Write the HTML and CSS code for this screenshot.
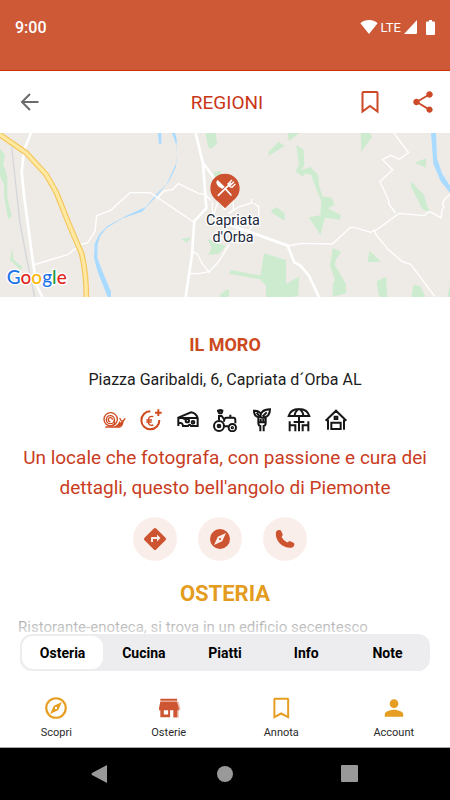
FILE: index.html
```html
<!DOCTYPE html>
<html lang="it">
<head>
    <meta charset="UTF-8">
    <meta name="viewport" content="width=device-width, initial-scale=1.0">
    <title>Il Moro - Osterie</title>
    <link rel="stylesheet" href="styles.css">
</head>
<body>

    <div class="status-bar">
        <span class="clock">9:00</span>
        <div class="status-icons">
            <svg width="18" height="14" viewBox="0 0 18 14"><path d="M.4 3.200C5-1 13-1 17.600 3.200L9 14z"/></svg>
            <span class="network">LTE</span>
            <svg width="14" height="14" viewBox="0 0 14 14"><path d="M13 0v13a1 1 0 0 1-1 1H0z"/></svg>
            <svg class="battery" width="9" height="15" viewBox="0 0 9 15"><path d="M3 0h3v1.500h2q1 0 1 1V14q0 1-1 1H1q-1 0-1-1V2.500q0-1 1-1h2z"/></svg>
        </div>
    </div>

    <header class="header">
        <button class="icon-btn back" aria-label="Indietro">
            <svg width="24" height="24" viewBox="0 0 24 24"><path d="M20.500 12H4.500M12 4l-8 8 8 8"/></svg>
        </button>
        <h1>REGIONI</h1>
        <div class="header-actions">
            <button class="icon-btn" aria-label="Salva">
                <svg width="26" height="26" viewBox="0 0 26 26"><path class="outline" d="M6.500 3h13q1 0 1 1v18.500L13 17l-7.500 5.500V4q0-1 1-1z"/></svg>
            </button>
            <button class="icon-btn" aria-label="Condividi">
                <svg width="26" height="26" viewBox="0 0 24 24"><path d="M18 16.080c-.76 0-1.440.3-1.960.77L8.910 12.700c.05-.23.09-.46.09-.7s-.04-.47-.09-.7l7.050-4.110c.54.5 1.250.81 2.040.81 1.660 0 3-1.340 3-3s-1.340-3-3-3-3 1.340-3 3c0 .24.04.47.09.7L8.040 9.810C7.500 9.310 6.790 9 6 9c-1.660 0-3 1.340-3 3s1.340 3 3 3c.79 0 1.500-.31 2.040-.81l7.120 4.160c-.05.21-.08.43-.08.65 0 1.610 1.310 2.920 2.920 2.920s2.920-1.310 2.920-2.920-1.310-2.920-2.920-2.920z"/></svg>
            </button>
        </div>
    </header>

    <main>
        <svg class="map" viewBox="0 8 1350 492" preserveAspectRatio="xMidYMid slice" role="img" aria-label="Mappa di Capriata d'Orba">
            <rect class="land" width="1350" height="510"/>
            <g class="wood">
                <path d="M0 55l15 18-5 28 12 38v65l14 54-12 8-12-70V162L0 138zM36 353l5 35 27 22-6 8-32-28z"/>
                <path d="M617 8h30l4 32-18 17-10-10zM640 127l20-6 8 15-20 8zM542 325l33-4-15 16zM622 325l25 12 30 10-20 23-32 3 10-20zM660 492l15-10v18h-14z"/>
                <path d="M806 64l30-30 18 13-48 29zM863 8h36l-32 24zM889 44l22 14 2 46-8 14 26-8 24 24 2 30 10 34 28 4 9 22-20 10 38 20-2 14-45-6-14 52-35-53 35-6 3-42-24-60-6-20-20-3-7 9-20-16 10-18z"/>
                <path d="M1082 8h28l6 12-32 44zM1244 97l34-13v28zM1232 152l40 42 12 40 16 18-34-17-33-67zM811 242l19-12 24 19v22l-27-16zM693 419l86 16 3-4 10-62 66 20v71l40-21-4 57-18 4H798v-33l-17-20-94-17zM675 479l12 0v21h-12z"/>
                <path d="M999 353l25 12-15 20-5 18 34 58v28l-40 11v-40l7-11-15-44zM1109 361l34 34h-41zM1130 453l28-13 4 60h-25zM1240 463l22 5 14 32h-42zM1350 463v37h-8z"/>
            </g>
            <path class="rail" d="M35 50l24 220 20 110 25 120"/>
            <g class="river">
                <path d="M474 8h10v32h-7zM516 8h9l5 18v70l-31 68-35 40-38 40-58 20-49 30-18 22-8 26-1 40 14 38 27 64v16h-10l-30-76-11-42 2-42 14-28 23-24 58-32 40-18 18-7 33-41 34-32 24-48 3-60z"/>
                <path d="M1293 8h15l3 76 15 45 24 38v20l-28-34-22-53-4-54z"/>
            </g>
            <g class="street">
                <path d="M100 404l103-31 38-30 22-6 22-34 5-47 42-16 58-53h61l130 88M470 206l22-24 26-5 17-17 61 29 19 4 20 18M577 363l15 8 15 30 20 24 28-30 30-48M568 430h28l31-6"/>
                <path d="M637 215v38M655 210l-15 45M685 250l30-20 40-12v-12M760 218l16 10v32l-30 42-50 0M700 240v-30M675 360l15-20"/>
                <path d="M863 347l42-8 92 2 54-50 12 0 49 15 20-9 65-48 76 7 14-13 36 19 3-22 6-10-4-14 10-14 12-10M1187 248l-21-28v-10l-26-56 38-36-30-30 24-13 26 12 28-20-45-59M1122 297l6 16 36 44 42 36 26 9 50 66 22 30"/>
            </g>
            <g class="road">
                <path d="M93 8L72 60l-7 65 8 78 27 200 10 62 17 35M587 8l22 92 10 134-36 38-7 100-19 128M609 98l30 40 36 100"/>
                <path d="M680 280l183 66 20 50 18 10 26 30 30 64"/>
            </g>
            <path class="highway-edge" d="M-5 10l83 57 60 65 30 52 40 100 37 86q14 60 14 130"/>
            <path class="highway" d="M-5 10l83 57 60 65 30 52 40 100 37 86q14 60 14 130"/>
            <g class="pin">
                <path class="pin-body" d="M675 130c-25 0-44 19-44 44 0 19 12 33 27 43l17 17 17-17c15-10 27-24 27-43 0-25-19-44-44-44z"/>
                <path class="tool" d="M655 195l37-36M675 174l18 20"/>
                <path class="tine" d="M685 160l10-10M691 165l10-10M696 171l9-9M684 160q2 10 12 11"/>
                <path class="blade" d="M651 151c-5 5 0 14 8 20l8 5 7-7-21-20z"/>
            </g>
            <text class="town" x="699" y="284">Capriata</text>
            <text class="town" x="699" y="334">d'Orba</text>
            <text class="google" x="20" y="462"><tspan class="g-blue">G</tspan><tspan class="g-red">o</tspan><tspan class="g-yellow">o</tspan><tspan class="g-blue">g</tspan><tspan class="g-green">l</tspan><tspan class="g-red">e</tspan></text>
        </svg>

        <section class="place">
            <h2>IL MORO</h2>
            <p class="address">Piazza Garibaldi, 6, Capriata d´Orba AL</p>

            <div class="features">
                <!-- chiocciola -->
                <svg class="red" viewBox="0 0 72 72"><circle cx="26" cy="34" r="20"/><circle cx="25" cy="35" r="12"/><path d="M37 35q4 16-8 18M25 41a6 6 0 1 1 6-6"/><path d="M10 57h44q8-4 9-18"/><path class="foot" d="M40 54q10-4 12-14l5 4 2-8q6 0 4 8-4 13-23 13z"/><path d="M58 39l-5-9M63 39l7-8"/></svg>
                <!-- buon rapporto qualità prezzo -->
                <svg class="red" viewBox="0 0 72 72"><path class="bold" d="M34 10A27 27 0 1 0 61 36M58 4v20M48 14h20"/><path d="M43 26q-15-4-15 13t15 12M22 36h17M22 42h16"/></svg>
                <!-- formaggi -->
                <svg viewBox="0 0 72 72"><path d="M7 54V29L45 13q15 2 20 17v24H45q-4-8-9 0H21q-1-10-9-9H7M7 30h58"/><circle cx="34" cy="38" r="5"/><circle cx="51" cy="43" r="4"/><path d="M21 30q4 6 8 0"/></svg>
                <!-- azienda agricola -->
                <svg viewBox="0 0 72 72"><circle cx="18" cy="54" r="15"/><circle cx="18" cy="54" r="4"/><circle cx="58" cy="59" r="11"/><circle cx="58" cy="59" r="2"/><path d="M33 55h13M18 36V24h8l9 12M33 41q0-12 8-12h20q6 0 6 7v10M52 28v-8M12 8h19"/><circle cx="22" cy="11" r="5"/></svg>
                <!-- cucina vegetariana -->
                <svg viewBox="0 0 72 72"><path d="M25 30v15q0 8 6 9v16M47 30v15q0 8-6 9v16M32 33v10M40 33v10M25 43h22M28 29Q12 26 12 8q15-1 21 10M32 28Q28 6 60 4q0 25-23 25zM20 14l11 14M38 25L50 13"/></svg>
                <!-- tavoli all'aperto -->
                <svg viewBox="0 0 72 72"><path d="M5 24Q10 4 36 3q26 1 31 21zM23 22q1-12 13-19 12 7 13 19M36 22v48M20 42h32M8 40v30M8 52h17v18M64 40v30M64 52H47v18"/></svg>
                <!-- alloggio -->
                <svg viewBox="0 0 72 72"><path d="M5 38L36 8l31 30M12 35v30M60 35v30M22 63V44h28v19zM32 26h8v7h-8z"/></svg>
            </div>

            <p class="intro">Un locale che fotografa, con passione e cura dei dettagli, questo bell'angolo di Piemonte</p>

            <div class="actions">
                <button class="round-btn" aria-label="Indicazioni">
                    <svg width="24" height="24" viewBox="0 0 24 24"><path d="M22.500 10.800l-9.300-9.300a1.700 1.700 0 0 0-2.400 0l-9.300 9.300a1.700 1.700 0 0 0 0 2.400l9.300 9.300a1.700 1.700 0 0 0 2.400 0l9.300-9.300a1.700 1.700 0 0 0 0-2.400zM14 14.500V12h-4v3H8v-4c0-.55.45-1 1-1h5V7.500l3.500 3.500z"/></svg>
                </button>
                <button class="round-btn" aria-label="Mappa">
                    <svg width="24" height="24" viewBox="0 0 24 24"><path d="M12 10.900a1.100 1.100 0 1 0 0 2.200 1.100 1.100 0 0 0 0-2.200zM12 2a10 10 0 1 0 0 20 10 10 0 0 0 0-20zm2.190 12.190L6 18l3.810-8.190L18 6z"/></svg>
                </button>
                <button class="round-btn" aria-label="Chiama">
                    <svg width="24" height="24" viewBox="0 0 24 24"><path d="M6.500 3q1.400 0 1.800 1.200l1.300 3q.3 1-.4 1.800L8.500 10q2 3.600 5.600 5.500l1.500-1q.8-.6 1.700-.2l3.200 1.500q1 .5.900 1.600-.3 3-3.700 3.400C9.500 21.200 2.600 14 2.800 6.500 3 3.600 4.800 3 6.500 3z"/></svg>
                </button>
            </div>

            <h3>OSTERIA</h3>
            <p class="description">Ristorante-enoteca, si trova in un edificio secentesco</p>
        </section>
        <div class="fade"></div>
    </main>

    <div class="tabs" role="tablist">
        <button class="tab active" role="tab" aria-selected="true">Osteria</button>
        <button class="tab" role="tab">Cucina</button>
        <button class="tab" role="tab">Piatti</button>
        <button class="tab" role="tab">Info</button>
        <button class="tab" role="tab">Note</button>
    </div>

    <nav class="bottom-nav">
        <a href="#scopri">
            <svg width="26" height="26" viewBox="0 0 24 24"><path d="M12 2a10 10 0 1 0 0 20 10 10 0 0 0 0-20zm0 18a8 8 0 1 1 0-16 8 8 0 0 1 0 16zm-5.500-2.500l7.510-3.490L17.500 6.500 9.990 9.990zM12 10.900a1.100 1.100 0 1 1 0 2.200 1.100 1.100 0 0 1 0-2.200z"/></svg>
            Scopri
        </a>
        <a href="#osterie" class="current">
            <svg width="26" height="26" viewBox="0 0 24 24"><path class="shade" d="M20 6h1l1.500 6v2H21v7h-5v-1h4z"/><path d="M4 3.500h15.500v1.700H4zM4 6h15.500l1.500 6v2h-1.200v6.500H16V14h-3v6.500H4V14H2.800v-2zm3.200 8v4h4v-4z"/></svg>
            Osterie
        </a>
        <a href="#annota">
            <svg width="26" height="26" viewBox="0 0 24 24"><path d="M18 2.500H6.500c-1 0-1.500.5-1.500 1.500v18l7.200-3.800L19.500 22V4c0-1-.5-1.500-1.500-1.500zm-.3 16.400l-5.500-3-5.400 3V4.300h10.900z"/></svg>
            Annota
        </a>
        <a href="#account">
            <svg width="26" height="26" viewBox="0 0 24 24"><path d="M12 12a4 4 0 1 0 0-8 4 4 0 0 0 0 8zm0 1.500c-3 0-8.500 1.400-8.500 4.300V20h17v-2.200c0-2.900-5.500-4.300-8.500-4.300z"/></svg>
            Account
        </a>
    </nav>

    <div class="system-bar">
        <svg width="18" height="18" viewBox="0 0 18 18"><path d="M16 0v18L1 10q-1-1 0-2z"/></svg>
        <svg width="18" height="18" viewBox="0 0 18 18"><circle cx="9" cy="9" r="8"/></svg>
        <svg width="18" height="18" viewBox="0 0 18 18"><rect width="17" height="17" rx="1"/></svg>
    </div>

</body>
</html>
```

FILE: styles.css
```css
* {
    box-sizing: border-box;
}
body {
    font-family: Roboto, "Liberation Sans", sans-serif;
    display: flex;
    flex-direction: column;
    height: 100vh;
    margin: 0;
    background: white;
    color: #1c1c1c;
}
h1, h2, h3, p {
    margin: 0;
}
button {
    font-family: inherit;
    border: none;
    padding: 0;
    background: none;
    cursor: pointer;
}
svg {
    display: block;
    flex-shrink: 0;
}

/* status bar */
.status-bar {
    display: flex;
    justify-content: space-between;
    align-items: center;
    flex-shrink: 0;
    height: 71px;
    padding: 0 15px 16px;
    background: #cd5937;
    border-bottom: 1px solid #cc3300;
    color: white;
    fill: white;
}
.clock {
    font-size: 16px;
    font-weight: 500;
}
.status-icons {
    display: flex;
    align-items: center;
    gap: 3px;
}
.network {
    font-size: 13px;
}
.battery {
    margin-left: 5px;
}

/* header */
.header {
    display: grid;
    grid-template-columns: 1fr auto 1fr;
    align-items: center;
    flex-shrink: 0;
    height: 62px;
    padding: 0 14px 0 18px;
}
h1 {
    font-size: 19px;
    font-weight: 400;
    color: #c93617;
}
.header-actions {
    display: flex;
    justify-content: flex-end;
    gap: 27px;
}
.icon-btn {
    fill: #cc4a28;
}
.outline {
    fill: none;
    stroke: #cc4a28;
    stroke-width: 2;
}
.back {
    justify-self: start;
    fill: none;
    stroke: #6b6b6b;
    stroke-width: 2;
}

/* map */
main {
    position: relative;
    flex: 1;
    min-height: 0;
    overflow: hidden;
}
.map {
    width: 100%;
    height: 164px;
    fill: none;
}
.land {
    fill: #eeebe7;
}
.wood {
    fill: #cdeccf;
}
.river {
    fill: #a9daff;
}
.rail {
    stroke: #d5d6da;
    stroke-width: 4;
}
.street {
    stroke: white;
    stroke-width: 4;
}
.road {
    stroke: white;
    stroke-width: 8;
}
.highway-edge {
    stroke: #f3c65c;
    stroke-width: 17;
}
.highway {
    stroke: #ffe9a2;
    stroke-width: 10;
}
.pin-body {
    fill: #cd5230;
}
.pin {
    stroke-linecap: round;
}
.tool {
    stroke: white;
    stroke-width: 5;
}
.tine {
    stroke: white;
    stroke-width: 4;
}
.blade {
    fill: white;
}
.town {
    font-size: 43px;
    text-anchor: middle;
    fill: #202638;
    stroke: white;
    stroke-width: 8;
    stroke-linejoin: round;
    paint-order: stroke;
}
.google {
    font-family: Lato, sans-serif;
    font-size: 57px;
    font-weight: 500;
    stroke: white;
    stroke-width: 8;
    stroke-linejoin: round;
    paint-order: stroke;
}
.g-blue {
    fill: #1a73e8;
}
.g-red {
    fill: #e2231a;
}
.g-yellow {
    fill: #fbb605;
}
.g-green {
    fill: #1e9641;
}

/* place */
.place {
    padding: 36px 18px 0;
    text-align: center;
}
h2 {
    font-size: 18px;
    line-height: 24px;
    font-weight: 700;
    color: #cc4a20;
}
.address {
    margin-top: 12px;
    font-size: 16px;
    line-height: 22px;
}
.features {
    display: flex;
    justify-content: center;
    gap: 13px;
    margin-top: 17px;
    fill: none;
    stroke: #161616;
    stroke-width: 6;
}
.features svg {
    width: 24px;
    height: 24px;
}
.features .red {
    stroke: #cf4a1f;
    stroke-width: 4;
}
.features .bold {
    stroke-width: 6;
}
.features .foot {
    fill: #cf4a1f;
    stroke: none;
}
.intro {
    margin-top: 11px;
    font-size: 19px;
    line-height: 30px;
    color: #c93c22;
}
.actions {
    display: flex;
    justify-content: center;
    gap: 21px;
    margin-top: 14px;
    padding-right: 10px;
}
.round-btn {
    display: flex;
    justify-content: center;
    align-items: center;
    width: 44px;
    height: 44px;
    border-radius: 50%;
    background: #faeeea;
    fill: #cd5430;
}
h3 {
    margin-top: 19px;
    font-size: 22px;
    line-height: 28px;
    font-weight: 700;
    color: #e49c20;
}
.description {
    margin-top: 10px;
    font-size: 15px;
    line-height: 18px;
    text-align: left;
    color: #4d4d4d;
}
.fade {
    position: absolute;
    left: 0;
    right: 0;
    bottom: 0;
    height: 20px;
    background: linear-gradient(rgba(255, 255, 255, 0.4), rgba(255, 255, 255, 0.8));
}

/* tabs */
.tabs {
    display: flex;
    flex-shrink: 0;
    height: 37px;
    margin: 0 20px;
    padding: 2px;
    border-radius: 12px;
    background: #ededef;
}
.tab {
    flex: 1;
    border-radius: 11px;
    font-size: 14px;
    font-weight: 700;
    color: black;
}
.tab.active {
    background: white;
}

/* bottom nav */
.bottom-nav {
    display: flex;
    flex-shrink: 0;
    height: 77px;
    padding-top: 24px;
    border-bottom: 1px solid #a8a8a8;
}
.bottom-nav a {
    display: flex;
    flex-direction: column;
    align-items: center;
    gap: 4px;
    flex: 1;
    font-size: 11px;
    line-height: 16px;
    color: #2a2a2a;
    text-decoration: none;
    fill: #e59e22;
}
.bottom-nav .current {
    fill: #cd5532;
}
.bottom-nav .shade {
    fill: #f0c3b3;
}
.system-bar {
    display: flex;
    justify-content: center;
    align-items: center;
    gap: 107px;
    flex-shrink: 0;
    height: 52px;
    background: black;
    fill: #999;
}
```
